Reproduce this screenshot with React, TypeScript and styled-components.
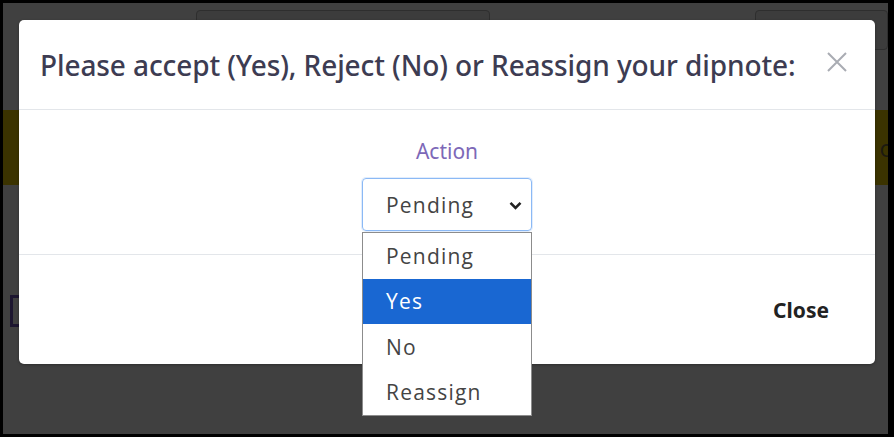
import React, { useState } from "react";
import styled, { createGlobalStyle } from "styled-components";

const GlobalStyle = createGlobalStyle`
  html, body {
    margin: 0;
    padding: 0;
  }
  body {
    font-family: "Open Sans", "Noto Sans", sans-serif;
  }
  * {
    box-sizing: border-box;
  }
`;

const options = ["Pending", "Yes", "No", "Reassign"];

export default function App() {
  const [value, setValue] = useState("Pending");
  const [hovered, setHovered] = useState("Yes");
  const [open, setOpen] = useState(true);

  return (
    <>
      <GlobalStyle />
      <Frame>
        <Page>
          <TopBar>
            <GhostInput $width={294} />
            <GhostInput $width={133} />
          </TopBar>
          <Banner>
            <BannerText>o</BannerText>
          </Banner>
          <SideTab />
        </Page>

        <Overlay>
          <Modal>
            <Header>
              <Title>Please accept (Yes), Reject (No) or Reassign your dipnote:</Title>
              <CloseX aria-label="Close">
                <svg width="22" height="22" viewBox="0 0 22 22">
                  <path
                    d="M2 2 L20 20 M20 2 L2 20"
                    stroke="#a9acb3"
                    strokeWidth="2"
                    fill="none"
                  />
                </svg>
              </CloseX>
            </Header>

            <Body>
              <Label>Action</Label>
              <SelectWrap>
                <SelectBox onClick={() => setOpen(!open)}>
                  <span>{value}</span>
                  <svg width="13" height="9" viewBox="0 0 13 9">
                    <path
                      d="M1.5 1.8 L6.5 6.8 L11.5 1.8"
                      stroke="#222"
                      strokeWidth="2.6"
                      fill="none"
                    />
                  </svg>
                </SelectBox>
                {open && (
                  <OptionList>
                    {options.map((opt) => (
                      <OptionItem
                        key={opt}
                        $active={opt === hovered}
                        onMouseEnter={() => setHovered(opt)}
                        onClick={() => {
                          setValue(opt);
                          setOpen(false);
                        }}
                      >
                        {opt}
                      </OptionItem>
                    ))}
                  </OptionList>
                )}
              </SelectWrap>
            </Body>

            <Footer>
              <CloseButton>Close</CloseButton>
            </Footer>
          </Modal>
        </Overlay>
      </Frame>
    </>
  );
}

const Frame = styled.div`
  position: relative;
  width: 894px;
  height: 437px;
  overflow: hidden;
  background: #404040;
  border-style: solid;
  border-color: #000;
  border-width: 3px 6px 3px 3px;
`;

const Page = styled.div`
  display: flex;
  flex-direction: column;
  height: 100%;
`;

const TopBar = styled.div`
  display: flex;
  justify-content: space-between;
  padding: 7px 0 0 193px;
  height: 107px;
`;

const GhostInput = styled.div<{ $width: number }>`
  width: ${(p) => p.$width}px;
  height: 40px;
  border: 1px solid #2e2e2e;
  border-radius: 4px;
  background: #3c3c3c;
`;

const Banner = styled.div`
  height: 75px;
  background: #3b3300;
  display: flex;
  align-items: center;
  justify-content: flex-end;
`;

const BannerText = styled.span`
  font-size: 24px;
  color: #1c1a10;
  margin-right: -6px;
`;

const SideTab = styled.div`
  margin: 110px 0 0 7px;
  width: 12px;
  height: 32px;
  border: 3px solid #1d1630;
  border-right: none;
`;

const Overlay = styled.div`
  position: absolute;
  inset: 0;
  padding: 17px 0 0 16px;
`;

const Modal = styled.div`
  width: 856px;
  height: 344px;
  background: #fff;
  border-radius: 5px;
  display: flex;
  flex-direction: column;
  box-shadow: 0 1px 3px rgba(0, 0, 0, 0.3);
`;

const Header = styled.div`
  height: 90px;
  display: flex;
  align-items: center;
  justify-content: space-between;
  padding: 0 27px 0 21px;
  border-bottom: 1px solid #e3e6ea;
`;

const Title = styled.h5`
  margin: 0;
  font-family: "Noto Sans", "Open Sans", sans-serif;
  font-size: 28px;
  font-weight: 500;
  color: #3d3c52;
  letter-spacing: -0.1px;
  line-height: 36px;
`;

const CloseX = styled.button`
  border: none;
  background: none;
  padding: 0;
  margin-top: -6px;
  display: flex;
  cursor: pointer;
`;

const Body = styled.div`
  height: 145px;
  display: flex;
  flex-direction: column;
  align-items: center;
  border-bottom: 1px solid #e3e6ea;
  padding-top: 27px;
`;

const Label = styled.label`
  font-family: "Noto Sans", "Open Sans", sans-serif;
  font-size: 21px;
  color: #7d68b8;
  line-height: 28px;
  margin-bottom: 13px;
`;

const SelectWrap = styled.div`
  position: relative;
  width: 170px;
`;

const SelectBox = styled.div`
  height: 53px;
  border: 1px solid #8bb9f5;
  border-radius: 4px;
  display: flex;
  align-items: center;
  justify-content: space-between;
  padding: 0 9px 0 23px;
  font-family: "Open Sans", sans-serif;
  font-size: 21px;
  letter-spacing: 1.2px;
  color: #444;
  cursor: pointer;
  box-shadow: 0 0 0 1px rgba(139, 185, 245, 0.25);

  svg {
    margin-top: 1px;
  }
`;

const OptionList = styled.ul`
  position: absolute;
  top: 54px;
  left: 0;
  width: 170px;
  margin: 0;
  padding: 0;
  list-style: none;
  background: #fff;
  border: 1px solid #8c8c8c;
  z-index: 2;
`;

const OptionItem = styled.li<{ $active: boolean }>`
  height: 45.5px;
  display: flex;
  align-items: center;
  padding-left: 23px;
  font-family: "Open Sans", sans-serif;
  font-size: 21px;
  letter-spacing: 1.2px;
  color: ${(p) => (p.$active ? "#fff" : "#444")};
  background: ${(p) => (p.$active ? "#1967d2" : "#fff")};
  cursor: default;
`;

const Footer = styled.div`
  flex: 1;
  display: flex;
  align-items: center;
  justify-content: flex-end;
  padding: 0 46px 0 0;
`;

const CloseButton = styled.button`
  border: none;
  background: none;
  padding: 0;
  font-family: "Noto Sans", "Open Sans", sans-serif;
  font-size: 21px;
  font-weight: 700;
  color: #222;
  cursor: pointer;
`;
